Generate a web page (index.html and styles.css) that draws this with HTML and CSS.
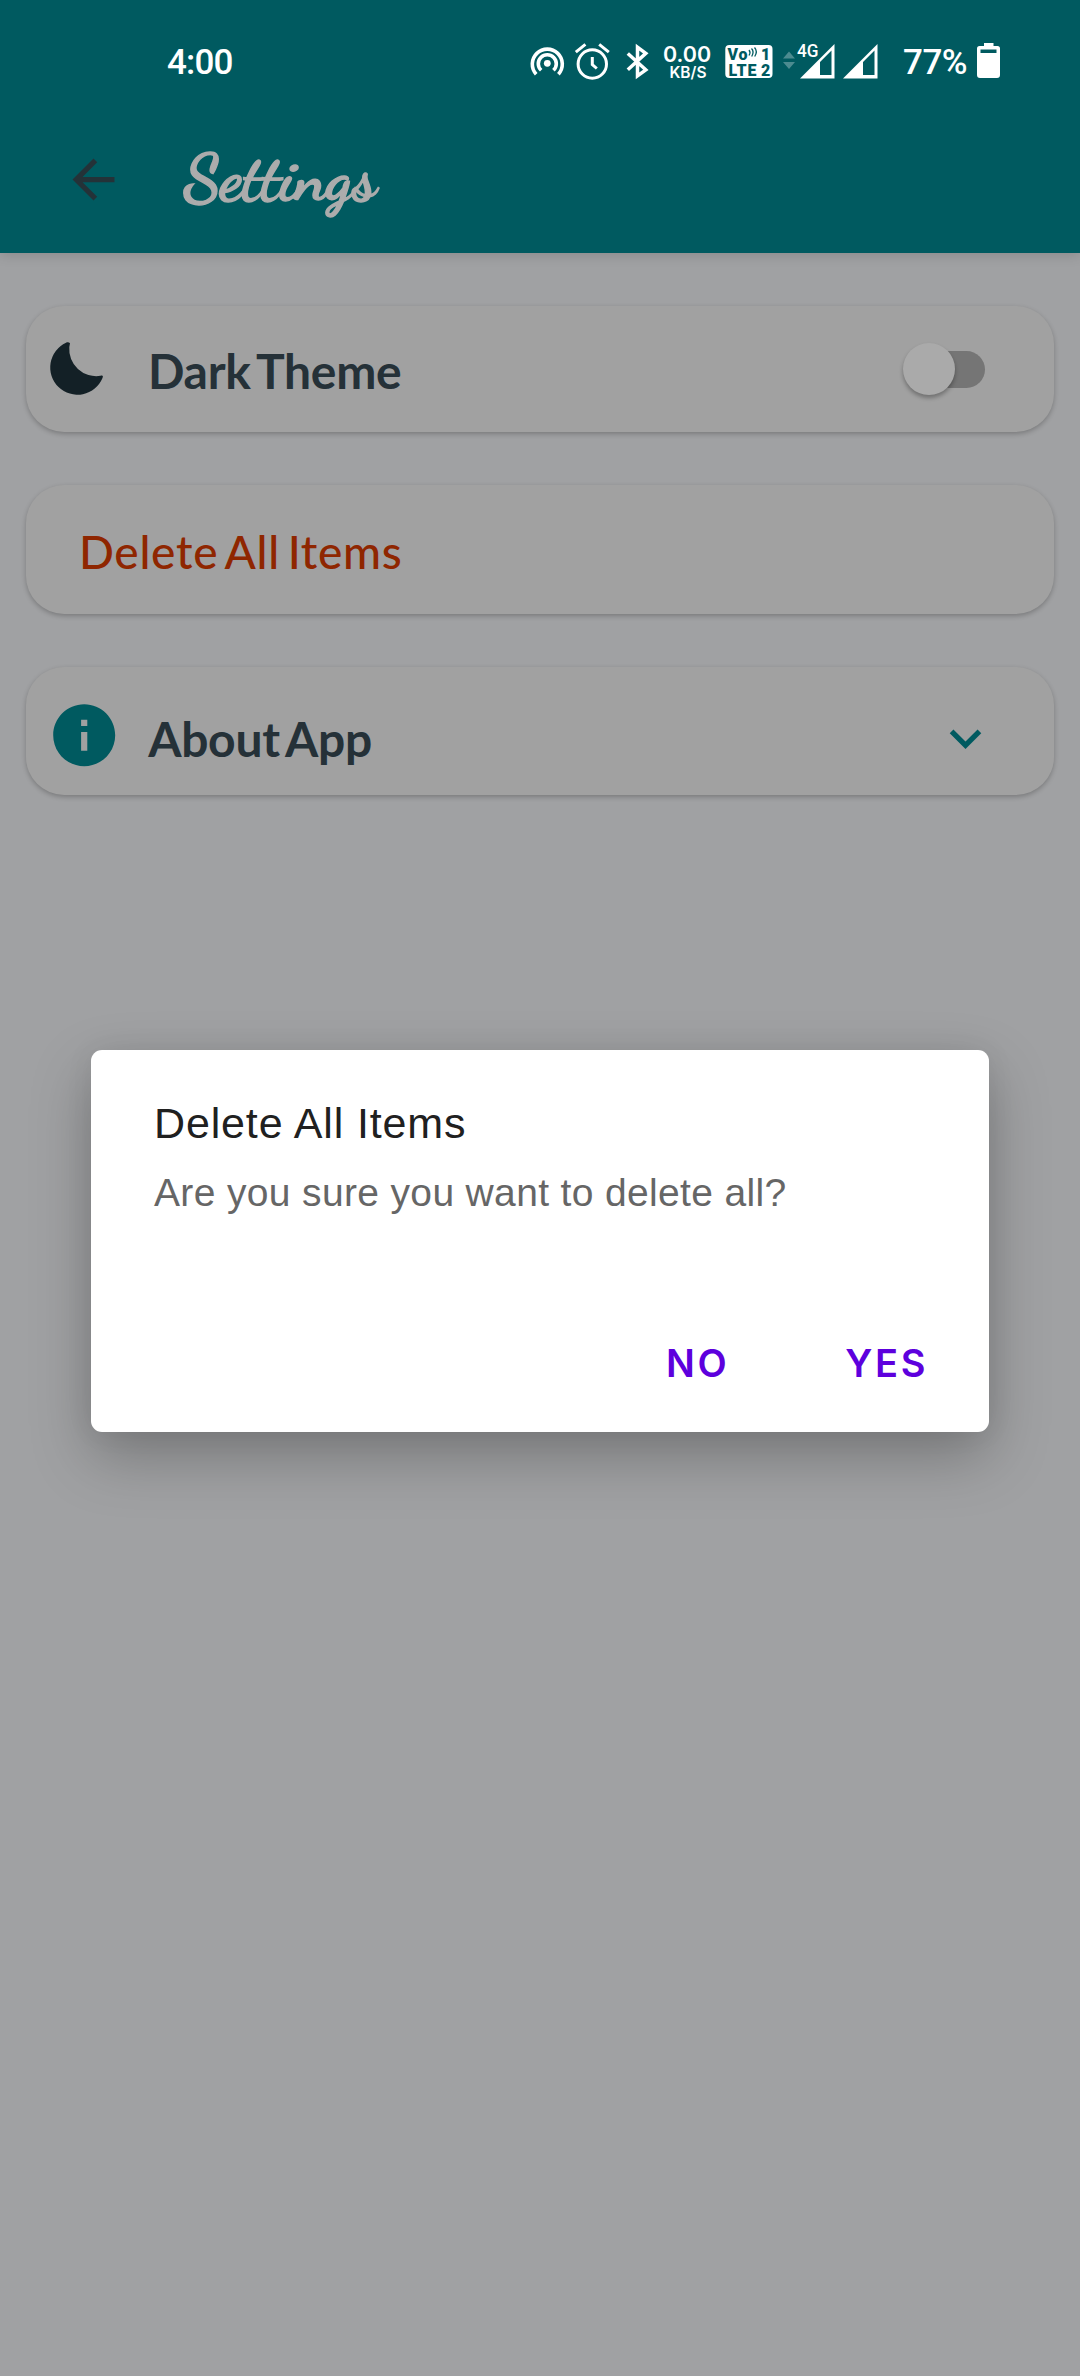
FILE: index.html
```html
<!DOCTYPE html>
<html lang="en">
<head>
<meta charset="utf-8">
<title>Settings</title>
<link rel="stylesheet" href="styles.css">
</head>
<body>
<header class="header">
  <div class="status">
    <span class="clock">4:00</span>
    <div class="status-icons">
      <svg class="hotspot" width="36" height="40" viewBox="529 42 36 40" fill="none" stroke="#fff" stroke-width="3.6"><circle cx="547.3" cy="63.3" r="3.4" fill="#fff" stroke="none"/><path d="M541.2 70.3a9 9 0 1 1 12.2 0M536.2 74.2a15 15 0 1 1 22.2 0"/></svg>
      <svg class="alarm" width="36" height="40" viewBox="574 42 36 40" fill="none" stroke="#fff" stroke-width="3"><circle cx="592.3" cy="64" r="14.2"/><path d="M592.3 57v7.5l4.5 4M575.8 52.2l9.6-7.8M608.8 52.2l-9.6-7.8"/></svg>
      <svg class="bluetooth" width="24" height="40" viewBox="625 42 24 40" fill="none" stroke="#fff" stroke-width="3.5"><path d="M627.8 53.5l18 16.3-8.3 6V47.2l8.3 6.2-18 16.3"/></svg>
      <div class="speed"><b class="rate">0.00</b><b class="unit">KB/S</b></div>
      <svg class="volte" width="48" height="40" viewBox="725 42 48 40"><rect x="725.3" y="45" width="47.2" height="33" rx="4" fill="#fff"/><g class="volte-text"><text x="727.5" y="60" textLength="20">Vo</text><text x="728.5" y="75.5" textLength="28">LTE</text><text x="761" y="60">1</text><text x="761" y="75.5">2</text></g><path d="M749 50q2 2.5 0 5.5M751.500 48.500q3 3 .2 8M754.500 47.500q3.500 4 .2 9" fill="none" stroke="#005a60" stroke-width="1.300"/></svg>
      <svg class="signal-main" width="54" height="40" viewBox="782 42 54 40"><path d="M783 58.500l6-7 6 7zM783 62l6 7 6-7z" fill="#4c8b90"/><path fill-rule="evenodd" d="M800 78.500L834.500 44v34.500zM820 75h11.500V50.500L820 62z" fill="#fff"/><text class="network" x="797" y="57" textLength="21.500" lengthAdjust="spacingAndGlyphs">4G</text></svg>
      <svg class="signal" width="36" height="40" viewBox="842 42 36 40"><path fill-rule="evenodd" d="M843 78.500L877.500 44v34.500zM863 75h11.500V50.500L863 62z" fill="#fff"/></svg>
      <span class="percent">77%</span>
      <svg class="battery" width="24" height="40" viewBox="977 42 24 40"><path fill-rule="evenodd" d="M984 43h9.500v3h4a2.500 2.500 0 0 1 2.500 2.500v26.500a3 3 0 0 1-3 3h-17a3 3 0 0 1-3-3V48.500a2.500 2.500 0 0 1 2.500-2.500h4.500zM980.500 49.500v3.500h16v-3.500z" fill="#fff"/></svg>
    </div>
  </div>
  <div class="toolbar">
    <svg class="back" width="63" height="63" viewBox="0 0 24 24" fill="#243238"><path d="M20 11H7.830l5.590-5.590L12 4l-8 8 8 8 1.410-1.410L7.830 13H20v-2z"/></svg>
    <h1 class="title">Settings</h1>
  </div>
</header>
<main class="cards">
  <section class="card theme">
    <svg class="moon" width="54" height="54" viewBox="0 0 54 54" fill="#132026"><path d="M21 1.200C20 .2 18.500 0 17 .8A27.200 27.200 0 1 0 53.500 36C54.500 33.800 53.500 33.200 51.500 33.800A27 27 0 0 1 20.300 5z"/></svg>
    <span class="label">Dark Theme</span>
    <div class="switch"><div class="thumb"></div></div>
  </section>
  <section class="card delete"><span class="danger">Delete All Items</span></section>
  <section class="card about">
    <svg class="info" width="74.400" height="74.400" viewBox="0 0 24 24" fill="#005a60"><path d="M12 2C6.480 2 2 6.480 2 12s4.480 10 10 10 10-4.480 10-10S17.520 2 12 2zm1 15h-2v-6h2v6zm0-8h-2V7h2v2z"/></svg>
    <span class="label">About App</span>
    <svg class="chevron" width="63" height="63" viewBox="0 0 24 24" fill="#005a60"><path d="M16.590 8.590L12 13.170 7.410 8.590 6 10l6 6 6-6z"/></svg>
  </section>
</main>
<div class="dialog" role="dialog">
  <h2 class="dialog-title">Delete All Items</h2>
  <p class="message">Are you sure you want to delete all?</p>
  <div class="actions"><span class="no">NO</span><span class="yes">YES</span></div>
</div>
</body>
</html>
```
FILE: styles.css
```css
* { box-sizing: border-box; }
body {
  margin: 0;
  width: 1080px;
  height: 2376px;
  position: relative;
  overflow: hidden;
  background: #a0a1a3;
  font-family: Roboto, sans-serif;
}
h1, h2, p { margin: 0; font-weight: 400; }
svg { display: block; flex: none; overflow: visible; }
.header {
  height: 253px;
  background: #005a60;
  box-shadow: 0 2px 12px rgba(0, 0, 0, .15);
}
.status {
  height: 124px;
  display: flex;
  justify-content: space-between;
  color: #fff;
  white-space: nowrap;
}
.clock, .percent { font-size: 35px; font-weight: 500; line-height: 42px; }
.clock { margin: 42px 0 0 167px; letter-spacing: -.8px; }
.status-icons { display: flex; margin: 42px 79px 0 0; }
.alarm { margin-left: 9px; }
.bluetooth { margin-left: 15px; }
.speed {
  width: 50px;
  margin-left: 13px;
  display: flex;
  flex-direction: column;
  align-items: center;
  font-family: Inter, sans-serif;
}
.rate { font-size: 21.500px; line-height: 22px; margin-top: 1px; font-weight: 600; }
.unit { font-size: 15.500px; line-height: 15px; margin-left: 2px; font-weight: 600; }
.volte { margin-left: 13px; }
.volte-text { font: 900 16px Roboto, sans-serif; fill: #005a60; }
.signal-main { margin-left: 9px; }
.network { font: 500 18px Roboto, sans-serif; fill: #fff; }
.signal { margin-left: 6px; }
.percent { width: 63px; margin: 0 11px 0 25px; letter-spacing: -.5px; }
.toolbar { display: flex; align-items: flex-start; padding: 24px 0 0 61.500px; }
.title {
  margin: -6px 0 0 59px;
  font: 700 66px/72px "Dancing Script", cursive;
  -webkit-text-stroke: 1.400px #acacac;
  letter-spacing: -.300px;
  color: #acacac;
}
.cards { display: flex; flex-direction: column; gap: 53px; padding: 53px 26px; }
.card {
  height: 128.500px;
  display: flex;
  align-items: flex-start;
  border-radius: 38px;
  background: #a1a1a1;
  box-shadow: 0 2px 5px rgba(0, 0, 0, .24);
  white-space: nowrap;
}
.theme { height: 126px; }
.moon { margin: 36px 0 0 23px; }
.label {
  flex: 1;
  font: 700 48px/60px Lato, sans-serif;
  letter-spacing: -.300px;
  word-spacing: -4.500px;
  color: #253138;
}
.theme .label { margin: 35px 0 0 45px; }
.switch {
  width: 73px;
  height: 37px;
  margin: 45px 69px 0 0;
  border-radius: 19px;
  background: #757575;
}
.thumb {
  width: 52px;
  height: 52px;
  margin: -8px 0 0 -9px;
  border-radius: 50%;
  background: #aaa;
  box-shadow: 0 3px 4px rgba(0, 0, 0, .3);
}
.danger {
  margin: 37px 0 0 53px;
  font: 500 46px/60px Lato, sans-serif;
  letter-spacing: .700px;
  word-spacing: -4.500px;
  color: #8f2600;
}
.info { margin: 31.500px 0 0 20.800px; }
.about .label { margin: 42px 0 0 27px; }
.chevron { margin: 40px 57px 0 0; }
.dialog {
  position: absolute;
  left: 91px;
  top: 1050px;
  width: 898px;
  height: 382px;
  padding: 49px 61px 0 63px;
  border-radius: 11px;
  background: #fff;
  box-shadow: 0 24px 60px rgba(0, 0, 0, .26), 0 0 30px rgba(0, 0, 0, .06);
  font-family: "Liberation Sans", sans-serif;
  white-space: nowrap;
}
.dialog-title { font-size: 43px; line-height: 48px; letter-spacing: .850px; color: #202020; }
.message { margin-top: 24px; font-size: 39px; line-height: 44px; letter-spacing: .350px; color: #666; }
.actions {
  display: flex;
  justify-content: flex-end;
  gap: 116px;
  margin-top: 125px;
  font: 600 38px/46px Inter, sans-serif;
  letter-spacing: 2.600px;
  color: #5d00dd;
}
```
